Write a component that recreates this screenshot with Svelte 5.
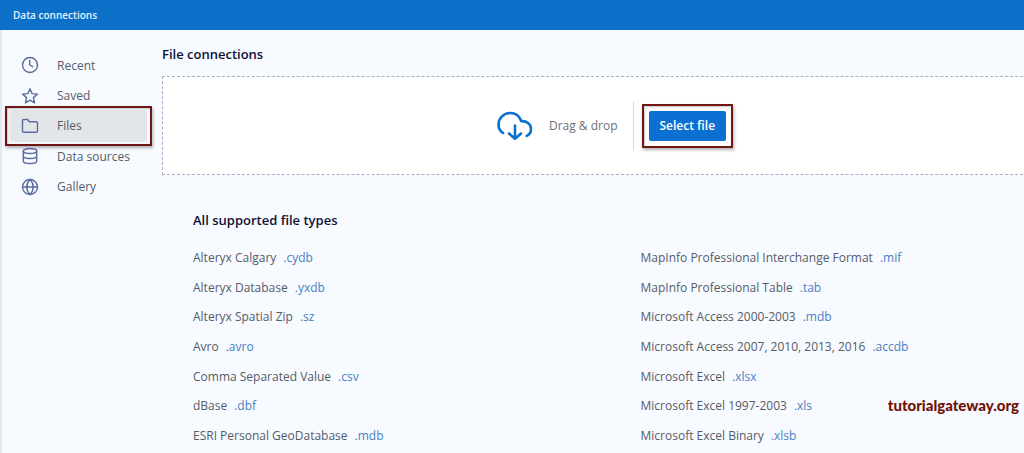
<script>
  let active = 'Files';

  const sections = ['Recent', 'Saved', 'Files', 'Data sources', 'Gallery'];

  const columns = [
    [
      { name: 'Alteryx Calgary', ext: '.cydb' },
      { name: 'Alteryx Database', ext: '.yxdb' },
      { name: 'Alteryx Spatial Zip', ext: '.sz' },
      { name: 'Avro', ext: '.avro' },
      { name: 'Comma Separated Value', ext: '.csv' },
      { name: 'dBase', ext: '.dbf' },
      { name: 'ESRI Personal GeoDatabase', ext: '.mdb' }
    ],
    [
      { name: 'MapInfo Professional Interchange Format', ext: '.mif' },
      { name: 'MapInfo Professional Table', ext: '.tab' },
      { name: 'Microsoft Access 2000-2003', ext: '.mdb' },
      { name: 'Microsoft Access 2007, 2010, 2013, 2016', ext: '.accdb' },
      { name: 'Microsoft Excel', ext: '.xlsx' },
      { name: 'Microsoft Excel 1997-2003', ext: '.xls' },
      { name: 'Microsoft Excel Binary', ext: '.xlsb' }
    ]
  ];
</script>

<div class="window">
  <header>Data connections</header>

  <div class="body">
    <nav>
      {#each sections as section}
        <a
          href="#{section.toLowerCase().replace(' ', '-')}"
          class:active={section === active}
          on:click={() => (active = section)}
        >
          <svg viewBox="0 0 18 18" aria-hidden="true">
            {#if section === 'Recent'}
              <circle cx="9" cy="9" r="7.5" />
              <path d="M8.7 4.5V9l3 1.7" />
            {:else if section === 'Saved'}
              <path d="M9 1.8l2.1 4.8 5.3.5-4 3.5 1.2 5.2L9 13.1l-4.6 2.7 1.2-5.2-4-3.5 5.3-.5z" />
            {:else if section === 'Files'}
              <path d="M1.5 14V3.8c0-.8.5-1.3 1.3-1.3h3.7l1.8 2.3h6.9c.8 0 1.3.5 1.3 1.3V14c0 .8-.5 1.3-1.3 1.3H2.8c-.8 0-1.3-.5-1.3-1.3z" />
            {:else if section === 'Data sources'}
              <ellipse cx="9" cy="4" rx="6.7" ry="2.5" />
              <path d="M2.3 4v10c0 1.4 3 2.5 6.7 2.5s6.7-1.1 6.7-2.5V4M2.3 9c0 1.4 3 2.5 6.7 2.5s6.7-1.1 6.7-2.5" />
            {:else}
              <circle cx="9" cy="9" r="7.5" />
              <path d="M1.5 9h15M9 1.5c4.3 4.2 4.3 10.8 0 15M9 1.5c-4.3 4.2-4.3 10.8 0 15" />
            {/if}
          </svg>
          {section}
        </a>
      {/each}
    </nav>

    <main>
      <h1>File connections</h1>

      <div class="dropzone">
        <svg viewBox="0 0 36 30" aria-hidden="true">
          <path d="M6 22C3 20 1.5 17 1.5 13.7 1.5 7.2 6.7 2 13.2 2c5.2 0 9.4 3.2 11 8.2 5.3-.5 9.8 3 9.800 7.700 0 3.200-1.800 5.800-4.300 7" />
          <path d="M18 14.500v13M12 22.500l6 5.300 6-5.300" />
        </svg>
        <span class="hint">Drag &amp; drop</span>
        <div class="action">
          <div class="marker">
            <button type="button">Select file</button>
          </div>
        </div>
      </div>

      <section>
        <h2>All supported file types</h2>
        <div class="types">
          {#each columns as column}
            <ul>
              {#each column as type}
                <li>{type.name}<span>{type.ext}</span></li>
              {/each}
            </ul>
          {/each}
        </div>
      </section>
    </main>
  </div>

  <div class="credit">tutorialgateway.org</div>
</div>

<style>
  :global(body) {
    margin: 0;
    background: #f7faff;
  }

  .window {
    position: relative;
    overflow: hidden;
    min-height: 100vh;
    font-family: "Open Sans", sans-serif;
    font-size: 12px;
    color: #555c68;
    box-shadow: inset 2px 0 #e4e7ec;
  }

  header {
    padding-left: 13px;
    background: #0c70c9;
    color: #e4f0fc;
    font-size: 10px;
    font-weight: 600;
    line-height: 30px;
  }

  .body {
    display: flex;
  }

  nav {
    box-sizing: border-box;
    flex: 0 0 162px;
    display: grid;
    grid-template-rows: repeat(5, 1fr);
    align-self: flex-start;
    min-height: 172px;
    padding: 20px 15px 0 10px;
  }

  nav a {
    position: relative;
    display: flex;
    align-items: center;
    gap: 18px;
    padding-left: 11px;
    color: inherit;
    text-decoration: none;
  }

  nav svg {
    width: 18px;
    height: 18px;
    fill: none;
    stroke: #5c6c9c;
    stroke-width: 1.4;
    stroke-linejoin: round;
    stroke-linecap: round;
  }

  nav a.active {
    margin: -1px 0;
    background: #e3e6e9;
    border-radius: 3px;
  }

  nav a.active::after {
    content: "";
    position: absolute;
    inset: -4px -5px;
    border: 2px solid #6e1714;
    box-shadow: 1px 2px 3px rgba(60, 60, 70, 0.4), inset 1px 1px 2px rgba(60, 60, 70, 0.3);
  }

  main {
    flex: 1;
    min-width: 0;
  }

  h1, h2 {
    margin: 0;
    font-size: 13px;
    font-weight: 600;
    line-height: 18px;
    color: #101036;
  }

  h1 {
    padding: 15px 0 13px;
  }

  /* the panel runs on past the window's right edge */
  .dropzone {
    box-sizing: border-box;
    display: flex;
    align-items: center;
    justify-content: center;
    min-height: 99px;
    margin-right: -44px;
    background: #fff;
    border: 1px dashed #a9aec0;
  }

  .dropzone svg {
    width: 36px;
    height: 30px;
    fill: none;
    stroke: #0c70d2;
    stroke-width: 2.6;
    stroke-linecap: round;
    stroke-linejoin: round;
  }

  .hint {
    margin: 0 15px 0 16px;
    color: #6c7078;
  }

  .action {
    padding: 3px 0 3px 8px;
    border-left: 1px solid #d5d7e0;
  }

  .marker {
    padding: 5px;
    border: 2px solid #6e1714;
    box-shadow: 1px 2px 3px rgba(60, 60, 70, 0.4), inset 1px 1px 2px rgba(60, 60, 70, 0.3);
  }

  button {
    display: block;
    height: 30px;
    padding: 0 11px;
    border: 0;
    border-radius: 2px;
    background: #0c70d2;
    color: #fff;
    font: inherit;
    font-weight: 600;
    cursor: pointer;
  }

  section {
    margin-right: -64px;
    padding: 36px 0 0 31px;
  }

  .types {
    display: grid;
    grid-template-columns: 1fr 1fr;
    margin-top: 14px;
  }

  ul {
    display: grid;
    grid-auto-rows: 1fr;
    min-height: 207px;
    margin: 0;
    padding: 0;
    list-style: none;
  }

  li {
    display: flex;
    align-items: center;
    gap: 7px;
  }

  li span {
    color: #4a7fc1;
  }

  .credit {
    position: absolute;
    right: 5px;
    bottom: 39px;
    color: #6e1208;
    font: 900 15px/18px Lato, sans-serif;
  }
</style>
